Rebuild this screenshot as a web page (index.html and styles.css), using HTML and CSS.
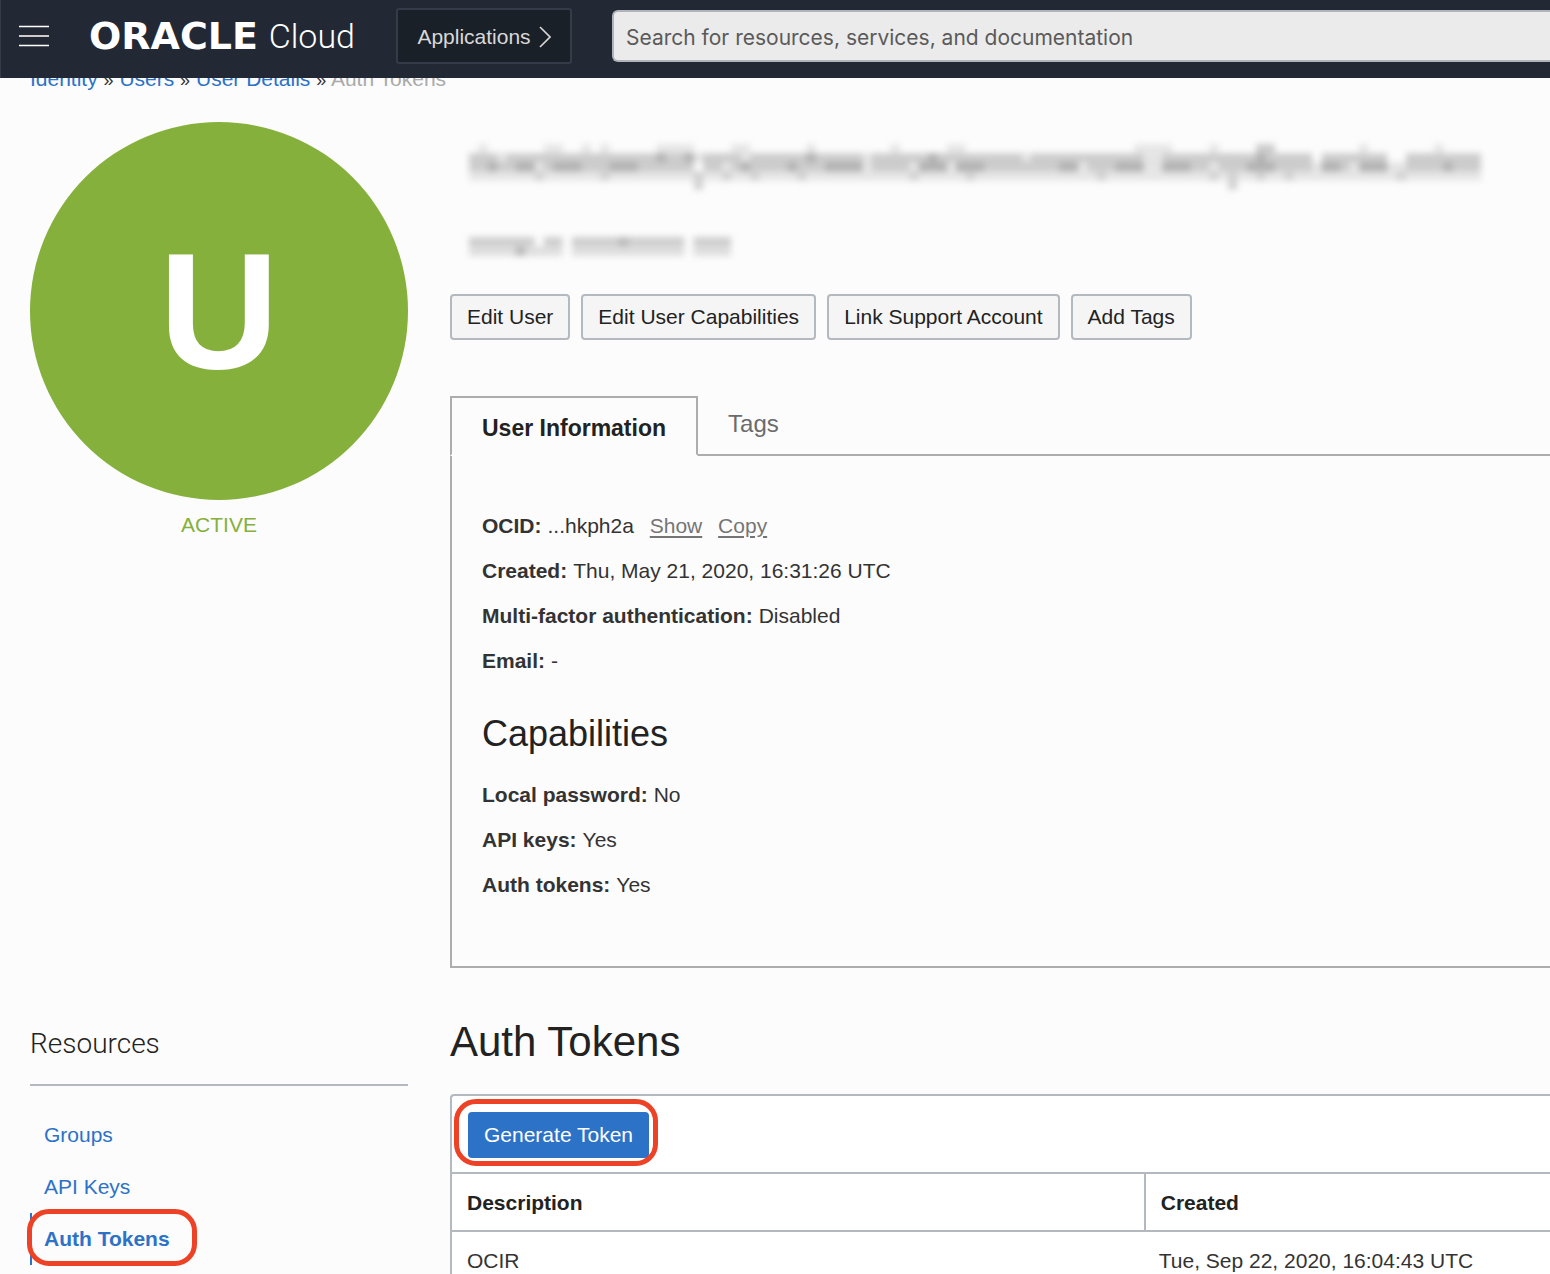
FILE: index.html
```html
<!DOCTYPE html>
<html lang="en">
<head>
<meta charset="utf-8">
<meta name="viewport" content="width=device-width, initial-scale=1">
<title>User Details - Auth Tokens</title>
<link rel="stylesheet" href="styles.css">
</head>
<body>
<header class="topbar">
  <button class="menu-button" type="button" aria-label="Menu">
    <svg width="30" height="22" viewBox="0 0 30 22" aria-hidden="true"><path d="M0 1.5h30M0 20.5h30" stroke="#fff" stroke-width="1.4"/><path d="M0 11h30" stroke="#cfcbca" stroke-width="2"/></svg>
  </button>
  <a class="brand" href="#"><span class="brand-name">ORACLE</span><span class="brand-product">Cloud</span></a>
  <button class="apps-button" type="button">Applications
    <svg width="12" height="22" viewBox="0 0 12 22" aria-hidden="true"><path d="M1 1l10 10L1 21" fill="none" stroke="#d8d8d8" stroke-width="1.6"/></svg>
  </button>
  <input class="search" type="search" aria-label="Search" placeholder="Search for resources, services, and documentation">
</header>

<nav class="crumbs" aria-label="Breadcrumb">
  <a href="#">Identity</a> <span class="crumb-mark">»</span> <a href="#">Users</a> <span class="crumb-mark">»</span> <a href="#">User Details</a> <span class="crumb-mark">»</span> <span class="crumb-current">Auth Tokens</span>
</nav>

<div class="layout">
  <aside class="profile">
    <div class="avatar">U</div>
    <p class="status">ACTIVE</p>
  </aside>

  <main class="details">
    <div class="identity">
      <svg class="hidden-name" viewBox="0 0 108 6" preserveAspectRatio="none" role="img" aria-label="Hidden user name">
        <path stroke="#e6e6e6" d="M1 .5h1M8 .5h2M12 .5h1M14 .5h1M20 .5h4M28 .5h2M36 .5h1M45 .5h1M51 .5h2M71 .5h4M79 .5h1M95 .5h1M103 .5h1M0 3.5h108"/>
        <path stroke="#cccccc" d="M0 1.5h72M74 1.5h16M91 1.5h7M100 1.5h8M0 2.5h7M8 2.5h16M25 2.5h2M28 2.5h14M43 2.5h4M48 2.5h3M52 2.5h13M66 2.5h6M74 2.5h5M80 2.5h10M91 2.5h3M95 2.5h3M100 2.5h8M84 .5h2"/>
        <path stroke="#e4e4e4" d="M3 1.5h1M7 2.5h1M24 1.5h1M27 2.5h1M42 2.5h1M47 2.5h1M51 2.5h1M65 2.5h1M72 1.5h2M72 2.5h2M79 2.5h1M90 2.5h1M94 2.5h1M98 2.5h2M29 1.5h1M42 1.5h1M59 1.5h1"/>
        <path stroke="#b2b2b2" d="M2 2.5h1M5 2.5h2M9 2.5h3M15 2.5h3M23 1.5h1M20 1.5h1M29 2.5h1M34 2.5h1M38 2.5h4M48 2.5h3M52 2.5h3M49 1.5h1M36 1.5h1M63 2.5h2M69 2.5h3M74 2.5h3M83 2.5h3M84 1.5h1M91 2.5h2M95 2.5h3M104 2.5h1"/>
        <path stroke="#d2d2d2" d="M7 3.5h1M14 3.5h1M24 3.5h1M24 4.5h1M27 3.5h1M30 3.5h1M35 3.5h1M47 3.5h1M53 3.5h1M67 3.5h1M79 3.5h1M81 3.5h1M81 4.5h1M84 3.5h1M87 3.5h1M99 3.5h1"/>
      </svg>
      <svg class="hidden-mail" viewBox="0 0 28 2" preserveAspectRatio="none" role="img" aria-label="Hidden e-mail address">
        <path stroke="#cecece" d="M0 .5h7M8 .5h2M11 .5h12M24 .5h4"/>
        <path stroke="#dedede" d="M0 1.5h10M11 1.5h12M24 1.5h4"/>
        <path stroke="#bababa" d="M16 .5h1M5 1.5h1"/>
      </svg>
    </div>

    <div class="actions">
      <button class="button" type="button">Edit User</button>
      <button class="button" type="button">Edit User Capabilities</button>
      <button class="button" type="button">Link Support Account</button>
      <button class="button" type="button">Add Tags</button>
    </div>

    <div class="tabs" role="tablist">
      <button class="tab tab-active" type="button" role="tab" aria-selected="true">User Information</button>
      <button class="tab" type="button" role="tab" aria-selected="false">Tags</button>
      <span class="tabs-rest"></span>
    </div>

    <section class="panel">
      <dl class="facts">
        <div class="fact"><dt>OCID:</dt><dd>...hkph2a <a class="quiet-link" href="#">Show</a> <a class="quiet-link" href="#">Copy</a></dd></div>
        <div class="fact"><dt>Created:</dt><dd>Thu, May 21, 2020, 16:31:26 UTC</dd></div>
        <div class="fact"><dt>Multi-factor authentication:</dt><dd>Disabled</dd></div>
        <div class="fact"><dt>Email:</dt><dd>-</dd></div>
      </dl>
      <h2 class="panel-title">Capabilities</h2>
      <dl class="facts">
        <div class="fact"><dt>Local password:</dt><dd>No</dd></div>
        <div class="fact"><dt>API keys:</dt><dd>Yes</dd></div>
        <div class="fact"><dt>Auth tokens:</dt><dd>Yes</dd></div>
      </dl>
    </section>
  </main>

  <nav class="resources" aria-label="Resources">
    <h2 class="resources-title">Resources</h2>
    <ul class="resource-list">
      <li><a class="resource" href="#">Groups</a></li>
      <li><a class="resource" href="#">API Keys</a></li>
      <li><a class="resource resource-active" href="#">Auth Tokens</a></li>
    </ul>
  </nav>

  <section class="tokens">
    <h1 class="tokens-title">Auth Tokens</h1>
    <div class="token-box">
      <div class="toolbar">
        <span class="marked"><button class="primary" type="button">Generate Token</button></span>
      </div>
      <table class="token-table">
        <thead><tr><th scope="col">Description</th><th scope="col">Created</th></tr></thead>
        <tbody><tr><td>OCIR</td><td>Tue, Sep 22, 2020, 16:04:43 UTC</td></tr></tbody>
      </table>
    </div>
  </section>
</div>
</body>
</html>
```
FILE: styles.css
```css
*,
*::after {
  box-sizing: border-box;
}

body {
  margin: 0;
  background: #fcfcfc;
  color: #333;
  font: 21px/24px "Liberation Sans", Arial, sans-serif;
}

h1, h2, p, ul, dl, dd {
  margin: 0;
  padding: 0;
  font-weight: 400;
}

button, input {
  font: inherit;
}

a {
  color: #2c72c7;
  text-decoration: none;
}

/* Top bar */
.topbar {
  position: sticky;
  top: 0;
  z-index: 2;
  display: flex;
  align-items: center;
  height: 78px;
  padding: 0 0 6px 18px;
  border-left: 1px solid #343c48;
  background: #222934;
}

.menu-button {
  display: flex;
  padding: 0;
  border: 0;
  background: none;
}

.brand {
  display: flex;
  flex: none;
  align-items: center;
  justify-content: space-between;
  width: 266px;
  margin-left: 40px;
  color: #fff;
}

.brand-name {
  font: bold 38px/40px "DejaVu Sans", sans-serif;
}

.brand-product {
  font: 300 34px/40px Roboto, sans-serif;
}

.apps-button {
  display: flex;
  flex: none;
  align-items: center;
  justify-content: center;
  gap: 8px;
  width: 176px;
  height: 56px;
  padding-top: 3px;
  margin: 0 40px 0 41px;
  border: 2px solid #353c47;
  border-radius: 3px;
  background: #1a2028;
  color: #d8d8d8;
}

.search {
  flex: 1;
  min-width: 0;
  height: 52px;
  padding: 2px 12px 0;
  border: 2px solid #b0b5bd;
  border-right: 0;
  border-radius: 6px 0 0 6px;
  background: #ebebeb;
  color: #555;
  font: 21px/24px Inter, sans-serif;
}

.search::placeholder {
  color: #5a5a5a;
  opacity: 1;
}

.crumbs {
  margin: -11px 0 31px 30px;
  white-space: nowrap;
}

.crumb-mark {
  font-size: 18px;
  line-height: 20px;
}

.crumb-current {
  color: #aaa;
}

.layout {
  display: grid;
  grid-template-columns: 378px minmax(0, 1fr);
  column-gap: 42px;
  padding-left: 30px;
}

/* Profile */
.avatar {
  display: flex;
  align-items: center;
  justify-content: center;
  aspect-ratio: 1;
  border-radius: 50%;
  background: #84b03b;
  color: #fff;
  font-size: 166px;
  font-weight: 700;
}

.status {
  margin-top: 13px;
  color: #84b03b;
  text-align: center;
}

/* User details */
.identity {
  display: flex;
  flex-direction: column;
  gap: 38px;
  height: 172px;
  padding: 22px 0 0 19px;
}

.identity path {
  stroke-width: 1;
}

.hidden-name {
  width: 1012px;
  height: 55px;
  filter: blur(3px);
}

.hidden-mail {
  width: 262px;
  height: 19px;
  filter: blur(3px);
}

.actions {
  display: flex;
  gap: 11px;
}

.button {
  height: 46px;
  padding: 0 15px;
  border: 2px solid #b4b8bf;
  border-radius: 4px;
  background: #f5f5f5;
  color: #222;
  white-space: nowrap;
}

.tabs {
  display: flex;
  height: 60px;
  margin-top: 56px;
}

.tab {
  padding: 0 30px 2px;
  border: 0;
  border-bottom: 2px solid #adadad;
  background: none;
  color: #6b6b6b;
  font-size: 24px;
}

.tab-active {
  padding: 4px 30px 0;
  border: 2px solid #adadad;
  border-bottom-color: #fcfcfc;
  color: #222;
  font-size: 23px;
  font-weight: 700;
}

.tabs-rest {
  flex: 1;
  border-bottom: 2px solid #adadad;
}

.panel {
  padding: 47px 30px 59px;
  border: 2px solid #adadad;
  border-width: 0 0 2px 2px;
}

.fact {
  display: flex;
  gap: 6px;
  line-height: 45px;
}

.fact dt {
  font-weight: 700;
}

.quiet-link {
  margin-left: 10px;
  color: #757575;
  text-decoration: underline;
  text-decoration-thickness: 2px;
  text-underline-offset: 3px;
}

.panel-title {
  margin: 29px 0 16px;
  color: #222;
  font-size: 36px;
  line-height: 44px;
}

/* Resources */
.resources-title {
  margin-top: 58px;
  padding-bottom: 22px;
  border-bottom: 2px solid #b4b8bf;
  color: #222;
  font: 300 28px/36px Roboto, sans-serif;
}

.resource-list {
  margin-top: 23px;
  list-style: none;
}

.resource {
  position: relative;
  display: block;
  padding: 14px 12px;
  border-left: 2px solid transparent;
}

.resource-active {
  border-left-color: #2c72c7;
  font-weight: 700;
}

/* Highlight rings */
.resource-active::after,
.marked::after {
  content: "";
  position: absolute;
  border: 5px solid #ed4226;
  border-radius: 22px;
  pointer-events: none;
}

.resource-active::after {
  top: -4px;
  left: -5px;
  width: 170px;
  height: 57px;
}

.marked {
  position: relative;
  display: inline-flex;
}

.marked::after {
  inset: -13px -9px -8px -14px;
}

/* Tokens */
.tokens-title {
  margin: 49px 0 27px;
  color: #222;
  font-size: 42px;
  line-height: 50px;
}

.token-box {
  border: 2px solid #b4b8bf;
  border-width: 2px 0 0 2px;
  border-radius: 4px 0 0 0;
  background: #fff;
}

.toolbar {
  display: flex;
  padding: 16px 16px 14px;
}

.primary {
  height: 46px;
  padding: 0 16px;
  border: 0;
  border-radius: 4px;
  background: #2c72c7;
  color: #fff;
}

.token-table {
  width: 100%;
  border-spacing: 0;
  table-layout: fixed;
  text-align: left;
}

.token-table th {
  padding: 17px 15px 15px;
  border: 2px solid #b4b8bf;
  border-width: 2px 0;
  color: #222;
}

.token-table th:first-child {
  width: 63%;
}

.token-table th + th {
  border-left-width: 2px;
}

.token-table td {
  padding: 17px 15px 1px;
}
```
